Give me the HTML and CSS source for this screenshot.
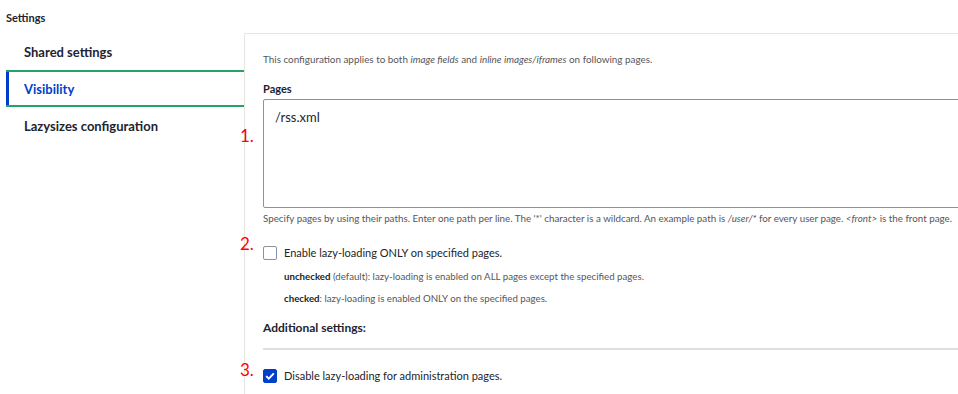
FILE: index.html
```html
<!DOCTYPE html>
<html lang="en">
<head>
  <meta charset="UTF-8" />
  <title>Settings | Lazy-loading</title>
  <link rel="stylesheet" href="styles.css">
</head>
<body>
  <div class="summary">Settings</div>

  <div class="vtabs">
    <ul class="vtabs-menu">
      <li class="vtabs-item"><a href="#">Shared settings</a></li>
      <li class="vtabs-item active"><a href="#">Visibility</a></li>
      <li class="vtabs-item"><a href="#">Lazysizes configuration</a></li>
    </ul>

    <div class="vtabs-panel">
      <p class="intro">This configuration applies to both <em>image fields</em> and <em>inline images/iframes</em> on following pages.</p>

      <div class="form-item">
        <label class="form-label" for="pages">Pages</label>
        <span class="marker marker-1">1.</span>
        <textarea id="pages" class="form-textarea">/rss.xml</textarea>
        <div class="description">Specify pages by using their paths. Enter one path per line. The '*' character is a wildcard. An example path is <em>/user/*</em> for every user page. <em>&lt;front&gt;</em> is the front page.</div>
      </div>

      <div class="form-item check-item">
        <span class="marker">2.</span>
        <label class="check">
          <span class="box"></span>
          <span>Enable lazy-loading ONLY on specified pages.</span>
        </label>
        <div class="check-desc">
          <p><strong>unchecked</strong> (default): lazy-loading is enabled on ALL pages except the specified pages.</p>
          <p><strong>checked</strong>: lazy-loading is enabled ONLY on the specified pages.</p>
        </div>
      </div>

      <h4 class="subhead">Additional settings:</h4>

      <div class="form-item check-item last">
        <span class="marker">3.</span>
        <label class="check">
          <span class="box checked">
            <svg width="10" height="8" viewBox="0 0 10 8"><path d="M1.2 4.1 L3.8 6.6 L8.8 1.4" fill="none" stroke="#fff" stroke-width="2"/></svg>
          </span>
          <span>Disable lazy-loading for administration pages.</span>
        </label>
      </div>
    </div>
  </div>
</body>
</html>
```

FILE: styles.css
```css
html { overflow: hidden; }
body {
  margin: 0;
  padding: 0 0 0 6px;
  font-family: 'Lato', sans-serif;
  color: #232429;
  background: #fff;
}
.summary {
  font-size: 11px;
  font-weight: bold;
  line-height: 14px;
  padding: 11px 0 8px;
  color: #222330;
}
.vtabs {
  display: flex;
  align-items: flex-start;
}
.vtabs-menu {
  list-style: none;
  margin: 0;
  padding: 0;
  width: 238px;
  flex: none;
}
.vtabs-item a {
  display: block;
  padding: 9px 0 8px 18px;
  line-height: 16px;
  font-size: 13px;
  font-weight: bold;
  color: #222330;
  text-decoration: none;
  border-top: 2px solid transparent;
  border-bottom: 2px solid transparent;
}
.vtabs-item.active a {
  color: #003ecc;
  border-top-color: #26a269;
  border-bottom-color: #26a269;
  box-shadow: inset 3px 0 0 #003ecc;
}
.vtabs-panel {
  flex: none;
  width: 760px;
  min-height: 380px;
  border-top: 1px solid #e6e4df;
  border-left: 1px solid #e6e4df;
  border-top-left-radius: 2px;
  padding: 18px 18px 0;
  box-sizing: border-box;
}
.intro {
  margin: 0 0 16px;
  font-size: 9.9px;
  line-height: 14px;
  color: #55565b;
}
.form-item { position: relative; }
.form-label {
  display: block;
  font-size: 11px;
  font-weight: bold;
  line-height: 14px;
  margin-bottom: 3px;
  color: #222330;
}
.form-textarea {
  display: block;
  width: 100%;
  height: 109px;
  box-sizing: border-box;
  margin: 0;
  padding: 9px 11px;
  border: 1px solid #919297;
  border-radius: 2px;
  font-family: inherit;
  font-size: 13px;
  line-height: 17px;
  color: #232429;
  resize: none;
}
.description {
  font-size: 9.8px;
  line-height: 14px;
  color: #55565b;
  margin-top: 3px;
  white-space: nowrap;
}
.marker {
  position: absolute;
  left: -23px;
  top: -11px;
  font-size: 17px;
  line-height: 20px;
  color: #f00;
}
.marker-1 { top: 44px; }
.check-item { margin-top: 20px; }
.check {
  display: flex;
  align-items: center;
  gap: 7px;
  font-size: 11px;
  line-height: 16px;
}
.box {
  width: 14px;
  height: 14px;
  box-sizing: border-box;
  border: 1px solid #8e929c;
  border-radius: 2px;
  display: flex;
  align-items: center;
  justify-content: center;
  flex: none;
}
.box.checked {
  background: #003ecc;
  border-color: #003ecc;
}
.check-desc {
  padding-left: 21px;
  font-size: 9.7px;
  line-height: 14px;
  color: #55565b;
}
.check-desc p { margin: 8px 0 0; }
.check-desc p + p { margin-top: 8px; }
.check-desc strong { color: #232429; }
.subhead {
  margin: 15px 0 0;
  padding-bottom: 12px;
  border-bottom: 2px solid #dedfe4;
  font-size: 12px;
  line-height: 16px;
  color: #222330;
}
.check-item.last { margin-top: 18px; }
.check-item.last .marker { top: -8px; }
```
